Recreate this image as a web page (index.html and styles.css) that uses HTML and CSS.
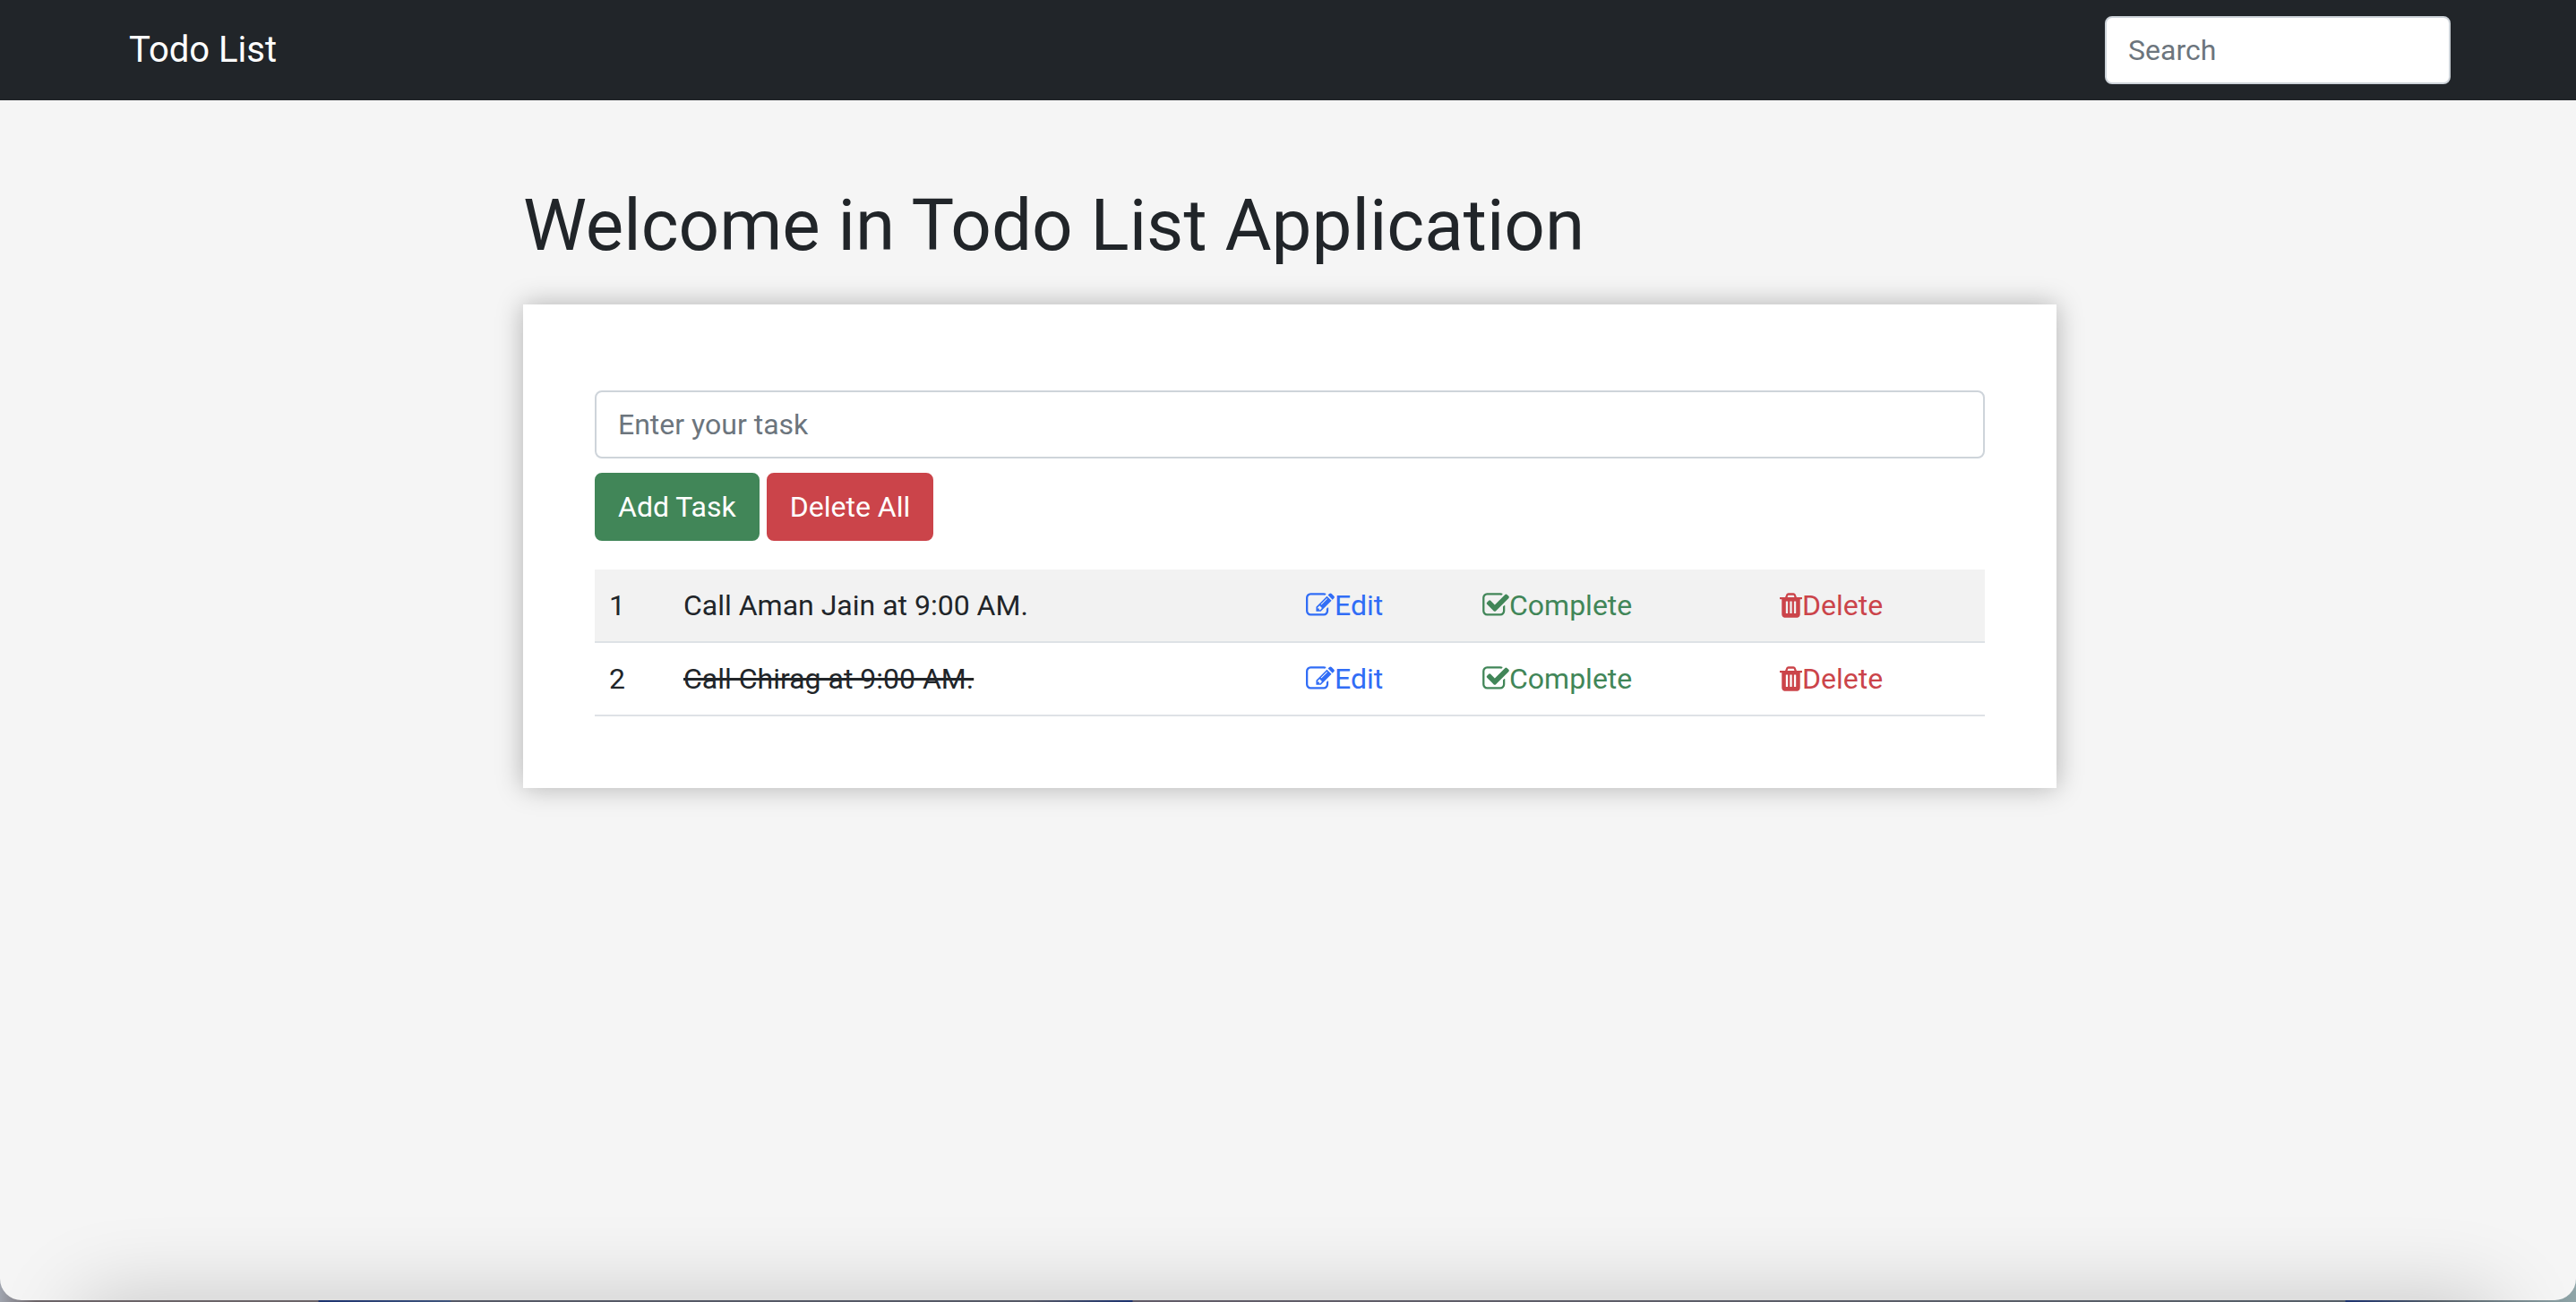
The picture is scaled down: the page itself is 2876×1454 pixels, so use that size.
FILE: index.html
```
<!DOCTYPE html>
<html lang="en">
<head>
<meta charset="utf-8">
<title>Todo List</title>
<link rel="stylesheet" href="styles.css">
</head>
<body>
<svg class="sprite" aria-hidden="true">
  <symbol id="edit" viewBox="0 0 1792 1792"><path d="M888 1184l116-116-152-152-116 116v56h96v96h56zm440-720q-16-16-33 1l-350 350q-17 17-1 33t33-1l350-350q17-17 1-33zm80 594v190q0 119-84.5 203.5t-203.5 84.5h-832q-119 0-203.5-84.5t-84.5-203.5v-832q0-119 84.5-203.5t203.5-84.5h832q63 0 117 25 15 7 18 23 3 17-9 29l-49 49q-14 14-32 8-23-6-45-6h-832q-66 0-113 47t-47 113v832q0 66 47 113t113 47h832q66 0 113-47t47-113v-126q0-13 9-22l64-64q15-15 35-7t20 29zm-96-738l288 288-672 672h-288v-288zm444 132l-92 92-288-288 92-92q28-28 68-28t68 28l152 152q28 28 28 68t-28 68z"/></symbol>
  <symbol id="check" viewBox="64 0 1664 1792"><path d="M1472 930v318q0 119-84.5 203.5t-203.5 84.5h-832q-119 0-203.5-84.5t-84.5-203.5v-832q0-119 84.5-203.5t203.5-84.5h832q63 0 117 25 15 7 18 23 3 17-9 29l-49 49q-10 10-23 10-3 0-9-2-23-6-45-6h-832q-66 0-113 47t-47 113v832q0 66 47 113t113 47h832q66 0 113-47t47-113v-254q0-13 9-22l64-64q10-10 23-10 6 0 12 3 20 8 20 29zm231-489l-814 814q-24 24-57 24t-57-24l-430-430q-24-24-24-57t24-57l110-110q24-24 57-24t57 24l263 263 647-647q24-24 57-24t57 24l110 110q24 24 24 57t-24 57z"/></symbol>
  <symbol id="trash" viewBox="192 0 1408 1792"><path d="M704 1376v-704q0-14-9-23t-23-9h-64q-14 0-23 9t-9 23v704q0 14 9 23t23 9h64q14 0 23-9t9-23zm256 0v-704q0-14-9-23t-23-9h-64q-14 0-23 9t-9 23v704q0 14 9 23t23 9h64q14 0 23-9t9-23zm256 0v-704q0-14-9-23t-23-9h-64q-14 0-23 9t-9 23v704q0 14 9 23t23 9h64q14 0 23-9t9-23zm-544-992h448l-48-117q-7-9-17-11h-317q-10 2-17 11zm928 32v64q0 14-9 23t-23 9h-96v948q0 83-47 143.5t-113 60.5h-832q-66 0-113-58.5t-47-141.5v-952h-96q-14 0-23-9t-9-23v-64q0-14 9-23t23-9h309l70-167q15-37 54-63t79-26h320q40 0 79 26t54 63l70 167h309q14 0 23 9t9 23z"/></symbol>
</svg>
<div class="window">
  <header class="navbar">
    <a class="brand" href="#">Todo List</a>
    <input class="field search" type="search" placeholder="Search" aria-label="Search">
  </header>
  <main class="container">
    <h1>Welcome in Todo List Application</h1>
    <section class="card">
      <form class="task-form">
        <input class="field" type="text" placeholder="Enter your task" aria-label="Enter your task">
        <div class="actions">
          <button class="btn btn-add" type="button">Add Task</button>
          <button class="btn btn-clear" type="button">Delete All</button>
        </div>
      </form>
      <table class="tasks">
        <colgroup><col class="col-number"><col><col class="col-edit"><col class="col-complete"><col class="col-delete"></colgroup>
        <tbody>
          <tr>
            <th scope="row">1</th>
            <td>Call Aman Jain at 9:00 AM.</td>
            <td><a class="edit" href="#"><svg class="icon" aria-hidden="true"><use href="#edit"/></svg>Edit</a></td>
            <td><a class="complete" href="#"><svg class="icon icon-check" aria-hidden="true"><use href="#check"/></svg>Complete</a></td>
            <td><a class="delete" href="#"><svg class="icon icon-trash" aria-hidden="true"><use href="#trash"/></svg>Delete</a></td>
          </tr>
          <tr>
            <th scope="row">2</th>
            <td><s>Call Chirag at 9:00 AM.</s></td>
            <td><a class="edit" href="#"><svg class="icon" aria-hidden="true"><use href="#edit"/></svg>Edit</a></td>
            <td><a class="complete" href="#"><svg class="icon icon-check" aria-hidden="true"><use href="#check"/></svg>Complete</a></td>
            <td><a class="delete" href="#"><svg class="icon icon-trash" aria-hidden="true"><use href="#trash"/></svg>Delete</a></td>
          </tr>
        </tbody>
      </table>
    </section>
  </main>
</div>
</body>
</html>
```
FILE: styles.css
```
* {
  box-sizing: border-box;
}

body {
  margin: 0;
  min-height: 100vh;
  padding-bottom: 2px;
  font: 32px/48px Roboto, "Liberation Sans", sans-serif;
  color: #212529;
  background: linear-gradient(90deg, #a0a4ae 0, #6b6468 40px, #6b6468 355px, #1c3370 356px, #40557c 503px, #555866 504px, #555866 1150px, #1c3370 1264px, #625c68 1265px, #555f68 2618px, #1c3370 2619px, #555f68 2720px, #8fa5a8 100%);
}

.sprite {
  position: absolute;
  width: 0;
  height: 0;
}

.window {
  position: relative;
  min-height: calc(100vh - 2px);
  overflow: hidden;
  border-radius: 0 0 24px 24px;
  background: #f5f5f5;
}

/* Soft shade along the lower edge of the window */
.window::after {
  content: "";
  position: absolute;
  top: 100%;
  left: 90px;
  right: 90px;
  height: 200px;
  box-shadow: 0 0 96px rgba(0, 0, 0, 0.2);
  pointer-events: none;
}

.navbar {
  display: flex;
  align-items: center;
  justify-content: space-between;
  padding: 18px 140px 18px 144px;
  background: #212529;
}

.brand {
  font-size: 40px;
  line-height: 60px;
  color: #fff;
  text-decoration: none;
}

.field {
  display: block;
  width: 100%;
  height: 76px;
  padding: 12px 24px;
  border: 2px solid #ced4da;
  border-radius: 8px;
  background: #fff;
  font: inherit;
  color: inherit;
  appearance: none;
}

.field::placeholder {
  color: #6c757d;
  opacity: 1;
}

.search {
  width: 386px;
}

.container {
  max-width: 1716px;
  margin: 0 auto;
  padding: 92px 0 64px 4px;
}

h1 {
  margin: 0 0 40px;
  font-size: 80px;
  line-height: 96px;
  font-weight: 400;
}

.card {
  padding: 96px 80px 80px;
  background: #fff;
  box-shadow: 0 0 28px rgba(0, 0, 0, 0.28);
}

.actions {
  display: flex;
  gap: 8px;
  margin: 16px 0 32px;
}

.btn {
  padding: 12px 24px;
  border: 2px solid transparent;
  border-radius: 8px;
  font: inherit;
  color: #fff;
  cursor: pointer;
}

.btn-add {
  background: #418658;
  border-color: #418658;
}

.btn-clear {
  background: #cb444a;
  border-color: #cb444a;
}

.tasks {
  width: 100%;
  table-layout: fixed;
  border-collapse: separate;
  border-spacing: 0;
}

.col-number {
  width: 83px;
}

.col-edit {
  width: 197px;
}

.col-complete {
  width: 332px;
}

.col-delete {
  width: 245px;
}

th,
td {
  padding: 16px;
  border-bottom: 2px solid #dee2e6;
  text-align: left;
  line-height: 48px;
}

th {
  font-weight: 400;
}

tr:nth-child(odd) {
  background: #f2f2f2;
}

td a {
  text-decoration: none;
}

.edit {
  color: #316df6;
}

.complete {
  color: #418658;
}

.delete {
  color: #cb444a;
}

.icon {
  width: 32px;
  height: 32px;
  vertical-align: -5px;
  fill: currentColor;
}

.icon-check {
  width: 30px;
}

.icon-trash {
  width: 25px;
}
```
